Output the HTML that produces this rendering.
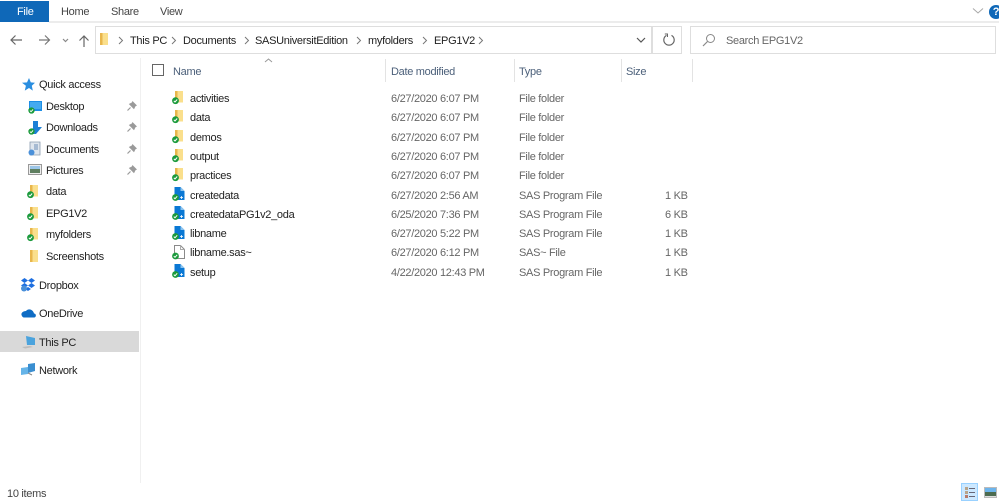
<!DOCTYPE html>
<html><head><meta charset="utf-8"><title>EPG1V2</title>
<style>
html,body{margin:0;padding:0;background:#fff}
#p{position:relative;width:999px;height:501px;overflow:hidden;background:#fff;font:11px/14px "Liberation Sans",sans-serif;letter-spacing:-.3px;color:#222;filter:blur(.35px)}
#p>*{position:absolute}
.t{white-space:nowrap;margin-top:1px}
.g{color:#666}
.h{color:#4c607a}
.b{background:#e3e3e3}
svg{overflow:visible}
</style></head><body><div id="p">
<svg width="0" height="0" style="left:0;top:0">
<defs>
<symbol id="ck" viewBox="0 0 8 8" overflow="visible"><circle cx="4" cy="4" r="3.6" fill="#1b9a3c"/><path d="M2.200 4.100 3.500 5.400 5.800 2.800" fill="none" stroke="#fff" stroke-width="1"/></symbol>
<symbol id="fo" viewBox="0 0 18 18" overflow="visible"><path d="M5 1H13V12.500H5Z" fill="#fadf8c"/><path d="M5 1H7.500V12.500H5Z" fill="#e8b64c"/><circle cx="5.500" cy="10.700" r="3.400" fill="#1b9a3c"/><path d="M3.800 10.800 5 12 7.200 9.500" fill="none" stroke="#fff" stroke-width="1"/></symbol>
<symbol id="sa" viewBox="0 0 18 18" overflow="visible"><path d="M4.500 1H10.500L14.500 5V14H4.500Z" fill="#0a78d4"/><path d="M10.500 1 14.500 5H10.500Z" fill="#8cc4ef"/><circle cx="5.500" cy="11.500" r="3.400" fill="#1b9a3c"/><path d="M3.800 11.600 5 12.800 7.200 10.300" fill="none" stroke="#fff" stroke-width="1"/><path d="M10 11.500H13M11.500 10V13" stroke="#fff" stroke-width=".8"/></symbol>
<symbol id="pin" viewBox="0 0 10 10" overflow="visible"><path d="M5.500 0 10 4.500 8.500 5.200 7 8.200 1.800 3 4.800 1.500Z" fill="#9a9a9a"/><path d="M3.500 6.500 .5 9.500" stroke="#9a9a9a" stroke-width="1.200"/></symbol>
</defs>
</svg>

<!-- ribbon -->
<div style="left:0;top:1px;width:49px;height:21px;background:#0f68b8"></div>
<div class="t" style="left:17px;top:4px;color:#fff">File</div>
<div class="t" style="left:61px;top:4px;color:#444">Home</div>
<div class="t" style="left:111px;top:4px;color:#444">Share</div>
<div class="t" style="left:160px;top:4px;color:#444">View</div>
<div style="left:49px;top:21px;width:950px;height:2px;background:#ececec"></div>
<svg style="left:972px;top:7px" width="12" height="8"><path d="M1 1.500 6 6 11 1.500" fill="none" stroke="#a8a8a8"/></svg>
<div class="t" style="left:989px;top:4px;width:14px;height:14px;border-radius:7px;background:#0f68b8;color:#fff;font-weight:bold;text-align:center;line-height:14px;font-size:11px">?</div>

<!-- nav -->
<svg style="left:10px;top:33px" width="90" height="15" fill="none" stroke="#666" stroke-width="1.200">
<path d="M1 7H12M5.500 2.500 1 7 5.500 11.500"/>
<path d="M29 7H39M35 2.500 39.500 7 35 11.500" stroke="#777"/>
<path d="M53 6 55.500 8.500 58 6" stroke="#888"/>
<path d="M74 14V3M69.500 7.500 74 3 78.500 7.500"/>
</svg>
<div style="left:95px;top:26px;width:556px;height:26px;border:1px solid #dedede;box-sizing:content-box"></div>
<div style="left:651px;top:26px;width:1px;height:28px;background:#dedede"></div>
<div style="left:681px;top:26px;width:1px;height:28px;background:#dedede"></div>
<div style="left:651px;top:26px;width:30px;height:1px;background:#dedede"></div>
<div style="left:651px;top:53px;width:30px;height:1px;background:#dedede"></div>
<svg style="left:100px;top:33px" width="9" height="13"><path d="M0 0H8V12H0Z" fill="#fadf8c"/><path d="M0 0H2.500V12H0Z" fill="#e8b64c"/></svg>
<svg style="left:118px;top:36px" width="364" height="10" fill="none" stroke="#777" stroke-width="1">
<path d="M1 1 4.500 4.500 1 8"/><path d="M54 1 57.500 4.500 54 8"/><path d="M127 1 130.500 4.500 127 8"/><path d="M239 1 242.500 4.500 239 8"/><path d="M305 1 308.500 4.500 305 8"/><path d="M361 1 364.500 4.500 361 8"/>
</svg>
<div class="t" style="left:130px;top:33px">This PC</div>
<div class="t" style="left:183px;top:33px">Documents</div>
<div class="t" style="left:255px;top:33px">SASUniversitEdition</div>
<div class="t" style="left:368px;top:33px">myfolders</div>
<div class="t" style="left:434px;top:33px">EPG1V2</div>
<svg style="left:636px;top:37px" width="10" height="7"><path d="M1 1 5 5 9 1" fill="none" stroke="#555" stroke-width="1.200"/></svg>
<svg style="left:662px;top:33px" width="14" height="14"><path d="M4.500 2.400A5.200 5.200 0 1 0 9.500 2.400" fill="none" stroke="#666" stroke-width="1.200"/><path d="M2.800 1 5.500 1V4" fill="none" stroke="#666" stroke-width="1"/></svg>
<div style="left:690px;top:26px;box-sizing:border-box;height:28px;width:306px;border:1px solid #dedede"></div>
<svg style="left:702px;top:33px" width="14" height="14"><circle cx="8.500" cy="5.500" r="4" fill="none" stroke="#888"/><path d="M5.500 8.500 1 13" stroke="#888" stroke-width="1.200"/></svg>
<div class="t g" style="left:726px;top:33px">Search EPG1V2</div>

<!-- column headers -->
<div style="left:152px;top:64px;width:10px;height:10px;border:1px solid #666"></div>
<svg style="left:264px;top:58px" width="9" height="5"><path d="M1 4 4.500 1 8 4" fill="none" stroke="#999"/></svg>
<div class="t h" style="left:173px;top:64px">Name</div>
<div class="t h" style="left:391px;top:64px">Date modified</div>
<div class="t h" style="left:519px;top:64px">Type</div>
<div class="t h" style="left:626px;top:64px">Size</div>
<div class="b" style="left:385px;top:59px;width:1px;height:23px"></div>
<div class="b" style="left:514px;top:59px;width:1px;height:23px"></div>
<div class="b" style="left:621px;top:59px;width:1px;height:23px"></div>
<div class="b" style="left:692px;top:59px;width:1px;height:23px"></div>
<div style="left:140px;top:58px;width:1px;height:425px;background:#f0f0f0"></div>

<!-- sidebar -->
<div style="left:0;top:331px;width:139px;height:21px;background:#d9d9d9"></div>
<svg style="left:22px;top:78px" width="13" height="13"><path d="M7 0 8.800 4.400 13 4.800 9.800 7.800 10.800 12.600 7 10 2.800 12.600 3.900 7.800 0 4.800 5 4.400Z" fill="#2a8ee0"/></svg>
<div class="t" style="left:39px;top:77px">Quick access</div>
<svg style="left:28px;top:101px" width="14" height="12"><rect x="1" y="0" width="13" height="10" fill="#1d8ee6"/><rect x="2" y="1" width="11" height="7" fill="#45aaf0"/></svg><svg style="left:28px;top:107px" width="7" height="7"><use href="#ck" width="7" height="7"/></svg>
<div class="t" style="left:46px;top:99px">Desktop</div>
<svg style="left:28px;top:121px" width="14" height="14"><path d="M5 0H10V6H14L8 13H2L2 10 5 7Z" fill="#1c7fd6"/></svg><svg style="left:28px;top:128px" width="7" height="7"><use href="#ck" width="7" height="7"/></svg>
<div class="t" style="left:46px;top:120px">Downloads</div>
<svg style="left:28px;top:142px" width="13" height="14"><path d="M2 0H12V13H2Z" fill="#dfe6ee" stroke="#8b9cb0" stroke-width=".8"/><path d="M6 3H10M6 5H10M6 7H10" stroke="#6c8fb5"/><circle cx="3.500" cy="10.500" r="3" fill="#4a90d9"/></svg>
<div class="t" style="left:46px;top:142px">Documents</div>
<svg style="left:28px;top:164px" width="14" height="12"><rect x=".5" y=".5" width="13" height="10" fill="#eee" stroke="#999"/><rect x="2" y="2" width="10" height="3" fill="#9cc6e8"/><rect x="2" y="5" width="10" height="4" fill="#5f7f60"/></svg>
<div class="t" style="left:46px;top:163px">Pictures</div>
<svg style="left:127px;top:101px" width="10" height="10"><use href="#pin" width="10" height="10"/></svg>
<svg style="left:127px;top:122px" width="10" height="10"><use href="#pin" width="10" height="10"/></svg>
<svg style="left:127px;top:144px" width="10" height="10"><use href="#pin" width="10" height="10"/></svg>
<svg style="left:127px;top:165px" width="10" height="10"><use href="#pin" width="10" height="10"/></svg>
<svg style="left:25px;top:184px" width="18" height="18"><use href="#fo" width="18" height="18"/></svg>
<div class="t" style="left:46px;top:184px">data</div>
<svg style="left:25px;top:206px" width="18" height="18"><use href="#fo" width="18" height="18"/></svg>
<div class="t" style="left:46px;top:206px">EPG1V2</div>
<svg style="left:25px;top:227px" width="18" height="18"><use href="#fo" width="18" height="18"/></svg>
<div class="t" style="left:46px;top:227px">myfolders</div>
<svg style="left:30px;top:250px" width="9" height="13"><path d="M0 0H8V12H0Z" fill="#fadf8c"/><path d="M0 0H2.500V12H0Z" fill="#e8b64c"/></svg>
<div class="t" style="left:46px;top:249px">Screenshots</div>
<svg style="left:21px;top:278px" width="14" height="14" fill="#1e6fe0"><path d="M0 2.500 3.500 0 7 2.500 3.500 5ZM7 2.500 10.500 0 14 2.500 10.500 5ZM0 7.500 3.500 5 7 7.500 3.500 10ZM7 7.500 10.500 5 14 7.500 10.500 10ZM4 11 7 9 10 11 7 13Z"/><circle cx="3" cy="10.500" r="3" fill="#4a90d9"/></svg>
<div class="t" style="left:39px;top:278px">Dropbox</div>
<svg style="left:21px;top:308px" width="15" height="10"><path d="M3 9.500H13C15.500 9.500 15.500 5.500 13 5.500 12 1.500 7.500 0 5 3 2 3 0 5 .5 7 1 8.500 2 9.500 3 9.500Z" fill="#0f6cc4"/></svg>
<div class="t" style="left:39px;top:306px">OneDrive</div>
<svg style="left:21px;top:336px" width="15" height="13"><path d="M5 0 14 2V9H6Z" fill="#4ba3dd"/><path d="M1 11 9 10 12 11 4 12.500Z" fill="#bbb"/></svg>
<div class="t" style="left:39px;top:335px">This PC</div>
<svg style="left:21px;top:363px" width="15" height="14"><path d="M7 1 14 0V8L7 10Z" fill="#3a8ed0"/><path d="M0 5 7 4V11L0 12Z" fill="#66b4e8"/><path d="M7 10 11 12" stroke="#888"/></svg>
<div class="t" style="left:39px;top:363px">Network</div>

<!-- files -->
<svg style="left:170px;top:90px" width="18" height="18"><use href="#fo" width="18" height="18"/></svg>
<svg style="left:170px;top:109px" width="18" height="18"><use href="#fo" width="18" height="18"/></svg>
<svg style="left:170px;top:129px" width="18" height="18"><use href="#fo" width="18" height="18"/></svg>
<svg style="left:170px;top:148px" width="18" height="18"><use href="#fo" width="18" height="18"/></svg>
<svg style="left:170px;top:167px" width="18" height="18"><use href="#fo" width="18" height="18"/></svg>
<svg style="left:170px;top:186px" width="18" height="18"><use href="#sa" width="18" height="18"/></svg>
<svg style="left:170px;top:205px" width="18" height="18"><use href="#sa" width="18" height="18"/></svg>
<svg style="left:170px;top:225px" width="18" height="18"><use href="#sa" width="18" height="18"/></svg>
<svg style="left:170px;top:244px" width="18" height="18"><path d="M4.500 1.500H10.500L14.500 5.500V14.500H4.500Z" fill="#fff" stroke="#8a8a8a"/><path d="M10.500 1.500V5.500H14.500" fill="none" stroke="#aaa"/><circle cx="5.500" cy="12" r="3.400" fill="#1b9a3c"/><path d="M3.800 12.100 5 13.300 7.200 10.800" fill="none" stroke="#fff"/></svg>
<svg style="left:170px;top:263px" width="18" height="18"><use href="#sa" width="18" height="18"/></svg>

<div class="t" style="left:190px;top:91px">activities</div>
<div class="t" style="left:190px;top:110px">data</div>
<div class="t" style="left:190px;top:130px">demos</div>
<div class="t" style="left:190px;top:149px">output</div>
<div class="t" style="left:190px;top:168px">practices</div>
<div class="t" style="left:190px;top:188px">createdata</div>
<div class="t" style="left:190px;top:207px">createdataPG1v2_oda</div>
<div class="t" style="left:190px;top:226px">libname</div>
<div class="t" style="left:190px;top:245px">libname.sas~</div>
<div class="t" style="left:190px;top:265px">setup</div>

<div class="t g" style="left:391px;top:91px">6/27/2020 6:07 PM</div>
<div class="t g" style="left:391px;top:110px">6/27/2020 6:07 PM</div>
<div class="t g" style="left:391px;top:130px">6/27/2020 6:07 PM</div>
<div class="t g" style="left:391px;top:149px">6/27/2020 6:07 PM</div>
<div class="t g" style="left:391px;top:168px">6/27/2020 6:07 PM</div>
<div class="t g" style="left:391px;top:188px">6/27/2020 2:56 AM</div>
<div class="t g" style="left:391px;top:207px">6/25/2020 7:36 PM</div>
<div class="t g" style="left:391px;top:226px">6/27/2020 5:22 PM</div>
<div class="t g" style="left:391px;top:245px">6/27/2020 6:12 PM</div>
<div class="t g" style="left:391px;top:265px">4/22/2020 12:43 PM</div>

<div class="t g" style="left:519px;top:91px">File folder</div>
<div class="t g" style="left:519px;top:110px">File folder</div>
<div class="t g" style="left:519px;top:130px">File folder</div>
<div class="t g" style="left:519px;top:149px">File folder</div>
<div class="t g" style="left:519px;top:168px">File folder</div>
<div class="t g" style="left:519px;top:188px">SAS Program File</div>
<div class="t g" style="left:519px;top:207px">SAS Program File</div>
<div class="t g" style="left:519px;top:226px">SAS Program File</div>
<div class="t g" style="left:519px;top:245px">SAS~ File</div>
<div class="t g" style="left:519px;top:265px">SAS Program File</div>

<div class="t g" style="left:665px;top:188px">1 KB</div>
<div class="t g" style="left:665px;top:207px">6 KB</div>
<div class="t g" style="left:665px;top:226px">1 KB</div>
<div class="t g" style="left:665px;top:245px">1 KB</div>
<div class="t g" style="left:665px;top:265px">1 KB</div>

<!-- status -->
<div class="t" style="left:7px;top:486px;color:#444">10 items</div>
<div style="left:961px;top:483px;width:17px;height:18px;background:#cce8ff;border:1px solid #99d1ff;box-sizing:border-box"></div>
<svg style="left:965px;top:487px" width="11" height="12"><rect x="0" y="0" width="3" height="3" fill="#b8a48a"/><rect x="0" y="4" width="3" height="3" fill="#b8a48a"/><rect x="0" y="8" width="3" height="3" fill="#b87a6a"/><path d="M4 1.500H10M4 5.500H10M4 9.500H10" stroke="#667"/></svg>
<svg style="left:984px;top:487px" width="13" height="11"><rect x=".5" y=".5" width="12" height="10" fill="#ddd" stroke="#bbb"/><rect x="1" y="1" width="11" height="4" fill="#6cb4ec"/><rect x="1" y="5" width="11" height="4" fill="#4c6b50"/></svg>
</div></body></html>
